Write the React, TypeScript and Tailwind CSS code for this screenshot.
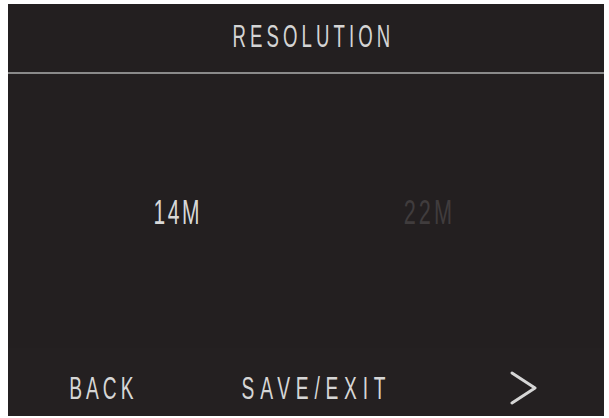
import React from "react";

const font = "font-['Liberation_Sans',Arial,sans-serif]";

export default function App() {
  return (
    <div className="w-[609px] h-[418px] bg-white pl-[8px] pt-[4px]">
      <div className={`w-[596px] h-[412px] bg-[#231f20] flex flex-col ${font}`}>
        <div className="h-[68px] flex items-center justify-center pl-[10px] pb-[3px]">
          <span className="inline-block scale-x-[0.6] text-[31px] leading-none tracking-[0.22em] pl-[0.22em] text-[#d4d4d4]">RESOLUTION</span>
        </div>
        <div className="h-[2px] bg-[#8a8a8a]" />
        <div className="h-[274px] flex items-center pl-[92px] gap-[100px]">
          <div className="w-[152px] flex justify-center">
            <span className="inline-block shrink-0 scale-x-[0.6] text-[35px] leading-none tracking-[0.12em] pl-[0.12em] text-[#d8d8d8]">14M</span>
          </div>
          <div className="w-[152px] flex justify-center">
            <span className="inline-block shrink-0 scale-x-[0.62] text-[35px] leading-none tracking-[0.14em] pl-[0.14em] text-[#403c3d]">22M</span>
          </div>
        </div>
        <div className="flex-1 flex items-center pt-[12px] bg-[#242021]">
          <div className="w-[186px] flex justify-center">
            <span className="inline-block shrink-0 scale-x-[0.6] text-[32px] leading-none tracking-[0.21em] pl-[0.21em] text-[#d6d6d6]">BACK</span>
          </div>
          <div className="w-[238px] flex justify-center">
            <span className="inline-block shrink-0 whitespace-nowrap scale-x-[0.6] text-[32px] leading-none tracking-[0.3em] pl-[0.3em] text-[#d6d6d6]">SAVE/EXIT</span>
          </div>
          <div className="ml-[78px] w-[28px] h-[34px] flex items-center justify-center">
            <svg width="28" height="34" viewBox="0 0 28 34" fill="none">
              <polyline points="2,2 25,17 2,32" stroke="#d6d6d6" strokeWidth="3" strokeLinecap="round" strokeLinejoin="round" />
            </svg>
          </div>
        </div>
      </div>
    </div>
  );
}
